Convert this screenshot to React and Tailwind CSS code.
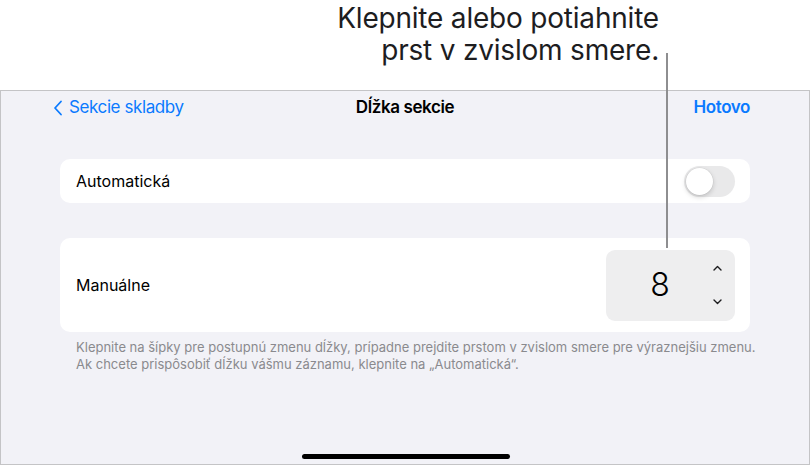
import React from 'react';

const sf = { fontFamily: 'Inter, "Noto Sans", sans-serif' };

function Toggle() {
    return (
        <div className="w-[51px] h-[31px] rounded-full bg-[#e9e9ea] p-[2px] flex items-center">
            <div className="w-[27px] h-[27px] rounded-full bg-white shadow-[0_2px_5px_rgba(0,0,0,0.18),0_0_0_0.5px_rgba(0,0,0,0.06)]" />
        </div>
    );
}

function Stepper({ value }) {
    return (
        <div className="w-[129px] h-[71px] rounded-[9px] bg-[#eeeeef] flex items-center">
            <div className="w-[108px] text-center text-[32px] leading-none text-black font-light">{value}</div>
            <div className="flex flex-col items-center justify-between h-[40px] -ml-[1px]">
                <svg width="9" height="6" viewBox="0 0 9 6" fill="none">
                    <path d="M1 5L4.5 1.5L8 5" stroke="#1c1c1e" strokeWidth="1.4" strokeLinecap="round" strokeLinejoin="round" />
                </svg>
                <svg width="9" height="6" viewBox="0 0 9 6" fill="none">
                    <path d="M1 1L4.5 4.5L8 1" stroke="#1c1c1e" strokeWidth="1.4" strokeLinecap="round" strokeLinejoin="round" />
                </svg>
            </div>
        </div>
    );
}

export default function App() {
    return (
        <div className="relative w-[811px] h-[466px] bg-white overflow-hidden" style={sf}>
            {/* Callout */}
            <div className="h-[90px] flex justify-end pr-[152px]">
                <p className="text-right text-[28px] leading-[32px] text-[#1d1d1f] pt-[2px] tracking-[-0.2px]">
                    Klepnite alebo potiahnite
                    <br />
                    prst v zvislom smere.
                </p>
            </div>

            {/* Device screen */}
            <div className="w-[810px] h-[375px] border border-[#c4c4c6] bg-[#f2f2f7] flex flex-col">
                {/* Nav bar */}
                <div className="h-[31px] mt-[1px] grid grid-cols-3 items-center text-[17px] tracking-[-0.4px]">
                    <div className="flex items-center pl-[52px] text-[#0a7aff]">
                        <svg width="10" height="16" viewBox="0 0 10 16" fill="none" className="mr-[6px]">
                            <path d="M8 1.5L2 8L8 14.5" stroke="#0a7aff" strokeWidth="1.8" strokeLinecap="round" strokeLinejoin="round" />
                        </svg>
                        <span>Sekcie skladby</span>
                    </div>
                    <div className="text-center font-semibold text-black">Dĺžka sekcie</div>
                    <div className="text-right pr-[59px] font-semibold text-[#0a7aff]">Hotovo</div>
                </div>

                {/* Automatic */}
                <div className="ml-[59px] mt-[36px] w-[690px] h-[44px] rounded-[10px] bg-white flex items-center justify-between pl-[16px] pr-[15px]">
                    <span className="text-[16px] text-black">Automatická</span>
                    <Toggle />
                </div>

                {/* Manual */}
                <div className="ml-[59px] mt-[35px] w-[690px] h-[94px] rounded-[10px] bg-white flex items-center justify-between pl-[16px] pr-[15px]">
                    <span className="text-[16px] text-black">Manuálne</span>
                    <Stepper value="8" />
                </div>

                <p className="ml-[75px] mt-[7px] text-[13px] leading-[17px] text-[#8a8a8e]">
                    Klepnite na šípky pre postupnú zmenu dĺžky, prípadne prejdite prstom v zvislom smere pre výraznejšiu zmenu.
                    <br />
                    Ak chcete prispôsobiť dĺžku vášmu záznamu, klepnite na „Automatická“.
                </p>

                <div className="flex-1" />
                <div className="flex justify-center mb-[5px]">
                    <div className="w-[208px] h-[5px] rounded-full bg-black ml-[1px]" />
                </div>
            </div>

            {/* Callout leader line */}
            <div className="absolute left-[666px] top-[53px] w-[2px] h-[195px] bg-[#8e8e90]" />
        </div>
    );
}
